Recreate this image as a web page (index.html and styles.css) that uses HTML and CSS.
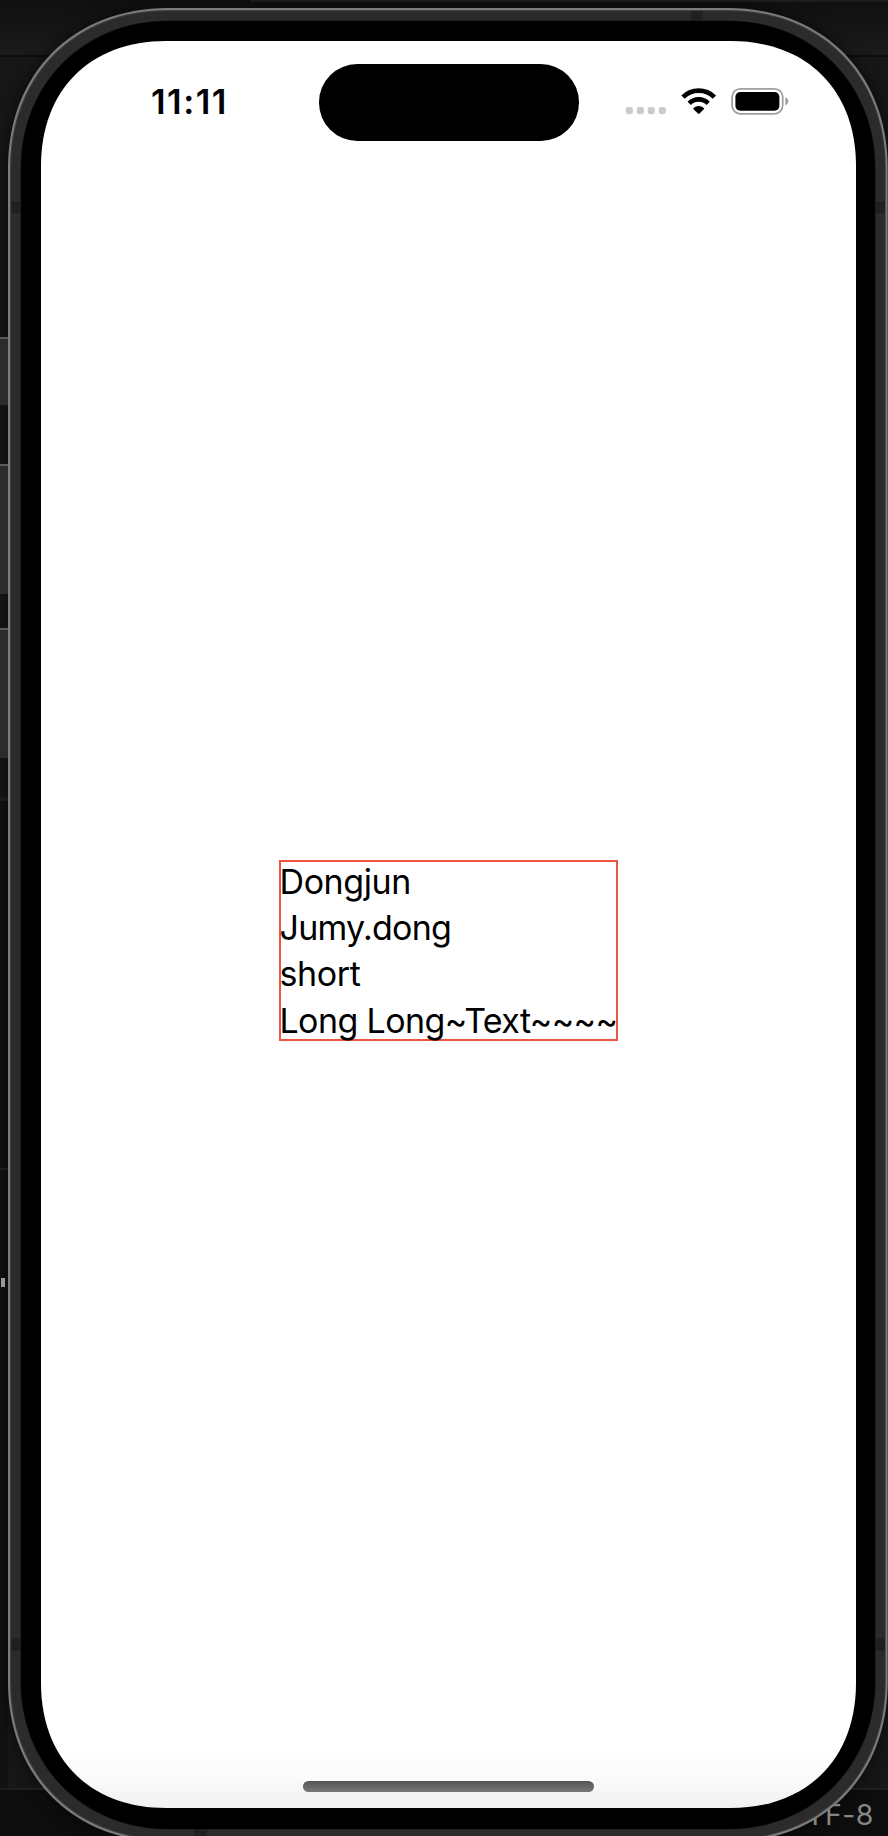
FILE: index.html
```html
<!DOCTYPE html>
<html lang="en">
<head>
<meta charset="utf-8">
<title>Simulator</title>
<link rel="stylesheet" href="styles.css">
</head>
<body>
<div class="desktop">
  <svg class="shell" width="888" height="1836" viewBox="0 0 888 1836">
    <defs>
      <linearGradient id="top" x1="0" y1="0" x2="0" y2="1"><stop offset="0" stop-color="#101010"/><stop offset="1" stop-color="#1b1b1b"/></linearGradient>
      <linearGradient id="foot" gradientUnits="userSpaceOnUse" x1="0" y1="1750" x2="0" y2="1808"><stop offset="0" stop-color="#fff"/><stop offset="0.5" stop-color="#fafafa"/><stop offset="1" stop-color="#f1f1f1"/></linearGradient>
      <filter id="soft" x="-10%" y="-10%" width="120%" height="120%"><feGaussianBlur stdDeviation="9"/></filter>
    </defs>
    <rect width="888" height="1836" fill="#171717"/>
    <rect width="888" height="55" fill="url(#top)"/>
    <rect y="55" width="888" height="2" fill="#0c0c0c"/>
    <rect x="250" width="638" height="2" fill="#1d1d1d"/>
    <rect y="800" width="8" height="1036" fill="#121212"/>
    <rect y="1788" width="888" height="48" fill="#0d0d0d"/>
    <path class="shadow" data-box="8 8 880 1834 160 .592" filter="url(#soft)"/>
    <rect y="1788" width="888" height="2" fill="#1e1e1e"/>
    <g fill="#2b2b2b"><rect y="337" width="9" height="68"/><rect y="464" width="9" height="130"/><rect y="628" width="9" height="130"/></g>
    <g fill="#5a5a5a"><rect y="337" width="9" height="2"/><rect y="464" width="9" height="2"/><rect y="628" width="9" height="2"/></g>
    <rect y="797" width="8" height="4" fill="#1a1a1a"/>
    <rect y="1168" width="8" height="2" fill="#1d1d1d"/>
    <rect x="1" y="1278" width="4" height="9" fill="#999"/>
    <text class="encoding" x="874" y="1825" text-anchor="end">UTF-8</text>
    <path fill="#7b7b7b" data-box="8 8 879.7 1834 160 .592"/>
    <path fill="#424242" data-box="10 10 875.7 1830 158 .59"/>
    <path fill="#2b2b2b" data-box="11 11 874 1828 157 .59"/>
    <g fill="#202020"><rect x="11" y="201" width="10" height="12"/><rect x="875" y="201" width="10" height="12"/><rect x="11" y="1638" width="10" height="13"/><rect x="875" y="1638" width="10" height="13"/><rect x="691" y="11" width="12" height="11"/><rect x="194" y="1828" width="13" height="8"/></g>
    <path fill="#1b1b1b" data-box="20.4 20.4 855.2 1809.2 148 .573"/>
    <path fill="#000" data-box="21 21 854 1808 147 .571"/>
    <path fill="url(#foot)" data-box="41 41 815 1767 125 .608"/>
  </svg>
  <main class="screen">
    <header class="status">
      <time class="time">11:11</time>
      <div class="island"></div>
      <div class="indicators">
        <svg width="164" height="30" viewBox="0 0 164 30">
          <g fill="#cbcbcb"><rect x="0.7" y="20" width="7.2" height="7.2" rx="2.4"/><rect x="11.7" y="20" width="7.2" height="7.2" rx="2.4"/><rect x="22.7" y="20" width="7.2" height="7.2" rx="2.4"/><rect x="33.7" y="20" width="7.2" height="7.2" rx="2.4"/></g>
          <g fill="none" stroke="#000" stroke-width="4.6"><path d="M58 10.1a22.2 22.2 0 0 1 31.4 0"/><path d="M64.2 16.3a13.5 13.5 0 0 1 19 0"/></g>
          <path d="M68.6 21.1a7.4 7.4 0 0 1 10.2 0c.5.5.4.8 0 1.2l-4.3 4.3q-.8.8-1.6 0l-4.3-4.3c-.4-.4-.5-.7 0-1.2z"/>
          <rect x="107.1" y="1.8" width="50.6" height="25" rx="8.2" fill="none" stroke="#a0a0a0" stroke-width="1.8"/>
          <rect x="110.4" y="5" width="44" height="18.7" rx="5"/>
          <path d="M160.3 10.3q3 1.1 3 4t-3 4z" fill="#a0a0a0"/>
        </svg>
      </div>
    </header>
    <section class="content">
      <div class="stack">
        <p class="line l1">Dongjun</p>
        <p class="line l2">Jumy.dong</p>
        <p class="line l3">short</p>
        <p class="line l4">Long Long~Text~~~~</p>
      </div>
    </section>
    <footer class="home"><div class="bar"></div></footer>
  </main>
</div>
<script src="shell.js"></script>
</body>
</html>
```
FILE: styles.css
```css
body { margin: 0; background: #171717; }
.desktop { position: relative; box-sizing: border-box; width: 888px; height: 1836px; padding: 41px 32px 28px 41px; overflow: hidden; }
.shell { position: absolute; top: 0; left: 0; }
.shadow { fill: #000; opacity: .6; }
.encoding { font: 28.5px Inter, sans-serif; fill: #858585; letter-spacing: .5px; }
.screen { position: relative; display: flex; flex-direction: column; height: 1767px; }
.status { display: grid; grid-template-columns: 277.5px 260px 1fr; height: 101px; padding-top: 23px; box-sizing: border-box; }
.time { padding: 17px 0 0 110px; font: 600 34.5px/42px Inter, sans-serif; letter-spacing: 1.5px; color: #000; }
.island { height: 76.5px; border-radius: 38.25px; background: #000; }
.indicators { padding: 23px 0 0 46px; }
.indicators svg { display: block; }
.content { flex: 1; padding: 718px 0 0 238px; }
.stack { box-sizing: border-box; width: 339px; height: 181px; border: 2px solid #ee5545; display: flex; flex-direction: column; }
.line { margin: 0 0 0 -1.5px; height: 46.4px; flex: none; font: 34px/46.4px Inter, sans-serif; color: #000; white-space: nowrap; }
.line:first-child { margin-top: -3.5px; }
.l1 { letter-spacing: -.4px; }
.l2 { letter-spacing: -.75px; }
.l3 { letter-spacing: -.4px; }
.l4 { letter-spacing: -.6px; }
.home { height: 27px; display: flex; justify-content: center; }
.bar { width: 291px; height: 10.5px; border-radius: 6px; background: linear-gradient(#555, #777); }
```
FILE: shell.js
```js
// Smooth-corner rectangles for the device outline: x, y, width, height, corner reach, handle ratio.
function outline(x, y, w, h, r, k) {
  const c = r * (1 - k), X = x + w, Y = y + h;
  return `M${x + r} ${y}H${X - r}C${X - c} ${y} ${X} ${y + c} ${X} ${y + r}` +
    `V${Y - r}C${X} ${Y - c} ${X - c} ${Y} ${X - r} ${Y}` +
    `H${x + r}C${x + c} ${Y} ${x} ${Y - c} ${x} ${Y - r}` +
    `V${y + r}C${x} ${y + c} ${x + c} ${y} ${x + r} ${y}Z`;
}
document.querySelectorAll('[data-box]').forEach(el => {
  el.setAttribute('d', outline(...el.dataset.box.split(' ').map(Number)));
});
```
